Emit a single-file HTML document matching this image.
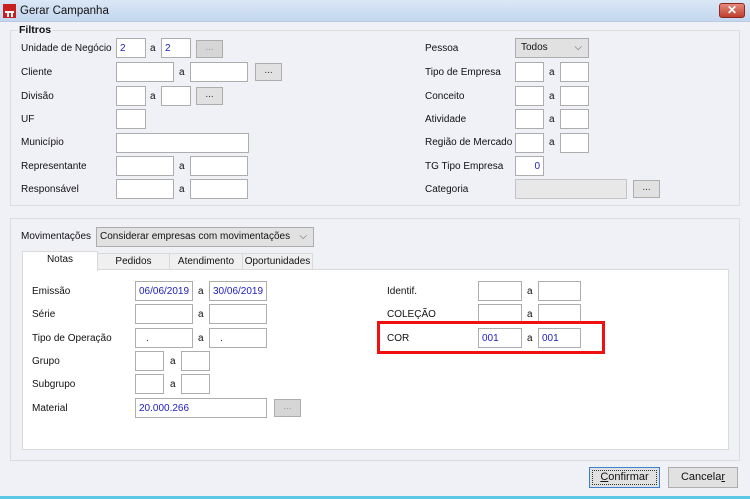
<!DOCTYPE html><html><head><style>
*{margin:0;padding:0;box-sizing:border-box}
body{width:750px;height:499px;overflow:hidden;background:#f0f0f7;font-family:"Liberation Sans",sans-serif;font-size:10px;color:#111;position:relative}
div,span{position:absolute}
.t{white-space:nowrap;line-height:13px}
.i{background:#fff;border:1px solid #adadad;height:20px;color:#2020c0;padding:3px 0 0 3px;line-height:13px;white-space:nowrap;overflow:hidden}
.b{background:#e1e1e1;border:1px solid #adadad;height:18px;text-align:center;line-height:14px;color:#333;white-space:nowrap}
.bd{background:#d6d6d6;color:#999}
.tab{top:253px;height:17px;background:#f0f0f0;border:1px solid #d9d9d9;text-align:center;line-height:15px}
</style></head><body>
<div style="left:0;top:0;width:750px;height:22px;background:linear-gradient(#dbe7f5,#c3d7ef);border-bottom:1px solid #b8cbe2"></div>
<div style="left:3px;top:4px;width:13px;height:14px;background:#c8201e"></div><div style="left:5px;top:11px;width:9px;height:2px;background:#fff"></div><div style="left:7px;top:13px;width:2px;height:4px;background:#fff"></div><div style="left:11px;top:13px;width:2px;height:4px;background:#fff"></div>
<div class="t" style="left:20px;top:5px;font-size:11.5px">Gerar Campanha</div>
<div style="left:719px;top:3px;width:26px;height:15px;background:linear-gradient(#e6897a,#c0402e);border:1px solid #8a2a1e;border-radius:3px;color:#fff;font-weight:bold;text-align:center;line-height:13px;font-size:12px">✕</div>
<div style="left:0;top:496px;width:750px;height:3px;background:#5bc8e6"></div>

<div style="left:10px;top:30px;width:730px;height:176px;border:1px solid #dcdcdc"></div>
<div class="t" style="left:17px;top:24px;background:#f0f0f7;font-weight:bold;padding:0 2px;font-size:10.5px">Filtros</div>

<div class="t" style="left:21px;top:42px">Unidade de Negócio</div>
<div class="i" style="left:116px;top:38px;width:30px">2</div><div class="t" style="left:150px;top:42px">a</div><div class="i" style="left:161px;top:38px;width:30px">2</div><div class="b bd" style="left:196px;top:40px;width:27px">...</div>
<div class="t" style="left:21px;top:66px">Cliente</div>
<div class="i" style="left:116px;top:62px;width:58px"></div><div class="t" style="left:179px;top:66px">a</div><div class="i" style="left:190px;top:62px;width:58px"></div><div class="b" style="left:255px;top:63px;width:27px">...</div>
<div class="t" style="left:21px;top:90px">Divisão</div>
<div class="i" style="left:116px;top:86px;width:30px"></div><div class="t" style="left:150px;top:90px">a</div><div class="i" style="left:161px;top:86px;width:30px"></div><div class="b" style="left:196px;top:87px;width:27px">...</div>
<div class="t" style="left:21px;top:113px">UF</div>
<div class="i" style="left:116px;top:109px;width:30px"></div>
<div class="t" style="left:21px;top:136px">Município</div>
<div class="i" style="left:116px;top:133px;width:133px"></div>
<div class="t" style="left:21px;top:160px">Representante</div>
<div class="i" style="left:116px;top:156px;width:58px"></div><div class="t" style="left:179px;top:160px">a</div><div class="i" style="left:190px;top:156px;width:58px"></div>
<div class="t" style="left:21px;top:183px">Responsável</div>
<div class="i" style="left:116px;top:179px;width:58px"></div><div class="t" style="left:179px;top:183px">a</div><div class="i" style="left:190px;top:179px;width:58px"></div>

<div class="t" style="left:425px;top:42px">Pessoa</div>
<div class="b" style="left:515px;top:38px;width:74px;height:20px;text-align:left;padding-left:5px;line-height:18px;color:#111">Todos<span style="right:6px;top:0;color:#555">⌵</span></div>
<div class="t" style="left:425px;top:66px">Tipo de Empresa</div>
<div class="i" style="left:515px;top:62px;width:29px"></div><div class="t" style="left:549px;top:66px">a</div><div class="i" style="left:560px;top:62px;width:29px"></div>
<div class="t" style="left:425px;top:90px">Conceito</div>
<div class="i" style="left:515px;top:86px;width:29px"></div><div class="t" style="left:549px;top:90px">a</div><div class="i" style="left:560px;top:86px;width:29px"></div>
<div class="t" style="left:425px;top:113px">Atividade</div>
<div class="i" style="left:515px;top:109px;width:29px"></div><div class="t" style="left:549px;top:113px">a</div><div class="i" style="left:560px;top:109px;width:29px"></div>
<div class="t" style="left:425px;top:136px">Região de Mercado</div>
<div class="i" style="left:515px;top:133px;width:29px"></div><div class="t" style="left:549px;top:136px">a</div><div class="i" style="left:560px;top:133px;width:29px"></div>
<div class="t" style="left:425px;top:160px">TG Tipo Empresa</div>
<div class="i" style="left:515px;top:156px;width:29px;text-align:right;padding-right:3px">0</div>
<div class="t" style="left:425px;top:183px">Categoria</div>
<div class="i" style="left:515px;top:179px;width:112px;background:#e8e8e8;border-color:#c4c4c4"></div><div class="b" style="left:633px;top:180px;width:27px">...</div>

<div style="left:10px;top:218px;width:730px;height:243px;border:1px solid #dcdcdc"></div>
<div class="t" style="left:21px;top:230px">Movimentações</div>
<div class="b" style="left:96px;top:227px;width:218px;height:20px;text-align:left;padding-left:3px;line-height:18px;color:#111">Considerar empresas com movimentações<span style="right:6px;top:0;color:#555">⌵</span></div>

<div style="left:22px;top:269px;width:707px;height:181px;background:#fff;border:1px solid #d9d9d9"></div>
<div class="tab" style="left:97px;width:73px">Pedidos</div>
<div class="tab" style="left:169px;width:74px">Atendimento</div>
<div class="tab" style="left:242px;width:71px">Oportunidades</div>
<div class="tab" style="left:22px;top:251px;width:76px;height:20px;background:#fff;border-bottom:none">Notas</div>

<div class="t" style="left:32px;top:285px">Emissão</div>
<div class="i" style="left:135px;top:281px;width:58px">06/06/2019</div><div class="t" style="left:198px;top:285px">a</div><div class="i" style="left:209px;top:281px;width:58px">30/06/2019</div>
<div class="t" style="left:32px;top:308px">Série</div>
<div class="i" style="left:135px;top:304px;width:58px"></div><div class="t" style="left:198px;top:308px">a</div><div class="i" style="left:209px;top:304px;width:58px"></div>
<div class="t" style="left:32px;top:332px">Tipo de Operação</div>
<div class="i" style="left:135px;top:328px;width:58px;padding-left:10px;color:#111">.</div><div class="t" style="left:198px;top:332px">a</div><div class="i" style="left:209px;top:328px;width:58px;padding-left:10px;color:#111">.</div>
<div class="t" style="left:32px;top:355px">Grupo</div>
<div class="i" style="left:135px;top:351px;width:29px"></div><div class="t" style="left:170px;top:355px">a</div><div class="i" style="left:181px;top:351px;width:29px"></div>
<div class="t" style="left:32px;top:378px">Subgrupo</div>
<div class="i" style="left:135px;top:374px;width:29px"></div><div class="t" style="left:170px;top:378px">a</div><div class="i" style="left:181px;top:374px;width:29px"></div>
<div class="t" style="left:32px;top:402px">Material</div>
<div class="i" style="left:135px;top:398px;width:132px">20.000.266</div><div class="b bd" style="left:274px;top:399px;width:27px">...</div>

<div class="t" style="left:387px;top:285px">Identif.</div>
<div class="i" style="left:478px;top:281px;width:44px"></div><div class="t" style="left:527px;top:285px">a</div><div class="i" style="left:538px;top:281px;width:43px"></div>
<div class="t" style="left:387px;top:308px">COLEÇÃO</div>
<div class="i" style="left:478px;top:304px;width:44px"></div><div class="t" style="left:527px;top:308px">a</div><div class="i" style="left:538px;top:304px;width:43px"></div>
<div class="t" style="left:387px;top:332px">COR</div>
<div class="i" style="left:478px;top:328px;width:44px">001</div><div class="t" style="left:527px;top:332px">a</div><div class="i" style="left:538px;top:328px;width:43px">001</div>
<div style="left:377px;top:321px;width:228px;height:33px;border:3px solid #f01010"></div>

<div class="b" style="left:589px;top:467px;width:71px;height:21px;border:1px solid #3c7fd1;line-height:18px;color:#111;outline:1px dotted #333;outline-offset:-4px;font-size:11px"><u>C</u>onfirmar</div>
<div class="b" style="left:668px;top:467px;width:70px;height:21px;line-height:18px;color:#111;font-size:11px">Cancela<u>r</u></div>
</body></html>
